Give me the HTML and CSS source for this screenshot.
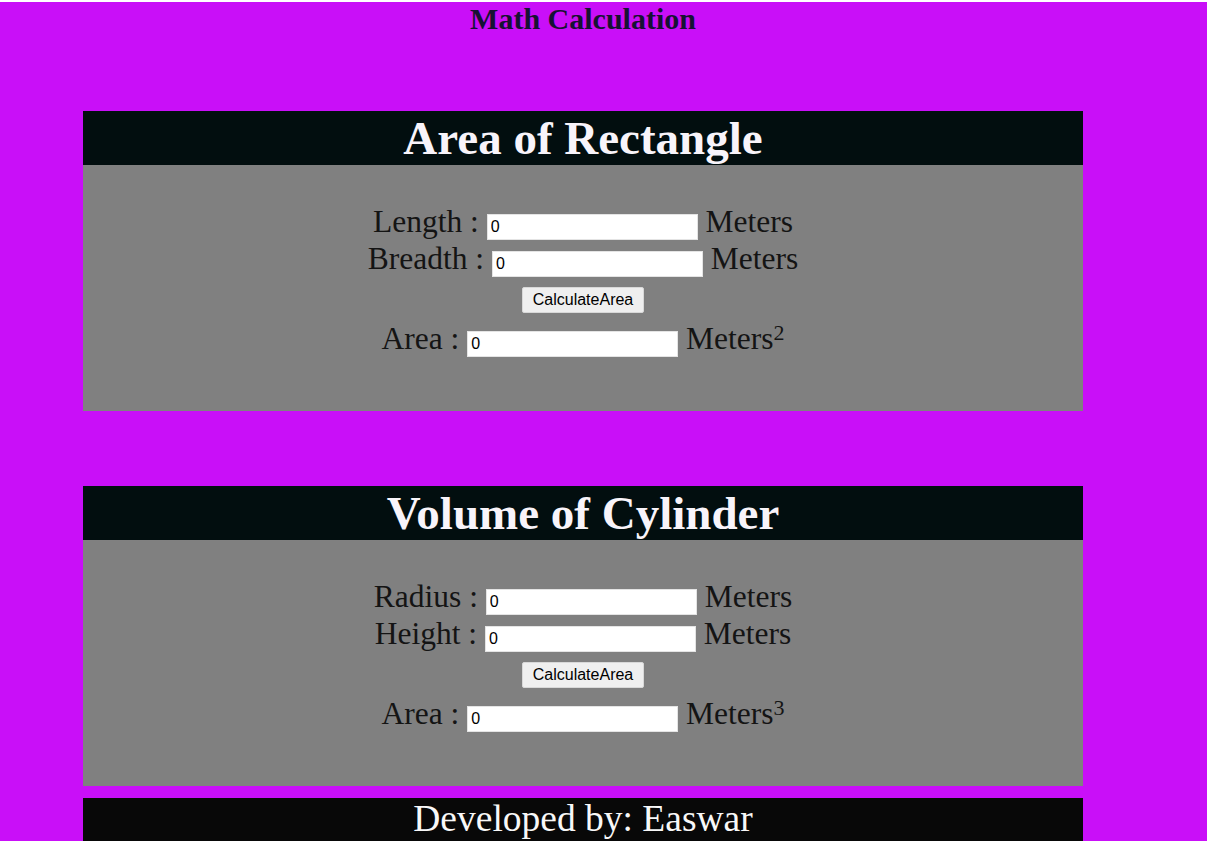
FILE: index.html
```html
<!DOCTYPE html>
<html lang="en">
<head>
<meta charset="utf-8">
<title>Math Calculation</title>
<link rel="stylesheet" href="styles.css">
</head>
<body>
<div class="page">
  <h1 class="site-title">Math Calculation</h1>

  <section class="card card-first">
    <h2 class="card-head">Area of Rectangle</h2>
    <div class="card-body">
      <div class="row">Length : <input class="field" type="text" value="0"> Meters</div>
      <div class="row">Breadth : <input class="field" type="text" value="0"> Meters</div>
      <div class="btn-row"><button class="btn" type="button">CalculateArea</button></div>
      <div class="row">Area : <input class="field" type="text" value="0"> Meters<sup class="pow">2</sup></div>
    </div>
  </section>

  <section class="card card-second">
    <h2 class="card-head">Volume of Cylinder</h2>
    <div class="card-body">
      <div class="row">Radius : <input class="field" type="text" value="0"> Meters</div>
      <div class="row">Height : <input class="field" type="text" value="0"> Meters</div>
      <div class="btn-row"><button class="btn" type="button">CalculateArea</button></div>
      <div class="row">Area : <input class="field" type="text" value="0"> Meters<sup class="pow">3</sup></div>
    </div>
  </section>

  <footer class="footer">Developed by: Easwar</footer>
</div>
</body>
</html>
```

FILE: styles.css
```css
html, body {
  margin: 0;
  padding: 0;
}

body {
  background: #c90ff8;
  border-top: 2px solid #ffffff;
  font-family: "Liberation Serif", "Times New Roman", serif;
  height: 839px;
  overflow: hidden;
}

.page {
  width: 1000px;
  margin-left: 83px;
}

.site-title {
  margin: 0;
  font-size: 30px;
  line-height: 34px;
  font-weight: bold;
  text-align: center;
  color: #161233;
}

.card {
  background: #808080;
}

.card-first {
  margin-top: 75px;
}

.card-second {
  margin-top: 75px;
}

.card-head {
  margin: 0;
  height: 54px;
  background: #020e0f;
  color: #f8f4fa;
  font-size: 47px;
  line-height: 54px;
  font-weight: bold;
  text-align: center;
}

.card-body {
  padding: 38px 0 54px;
}

.row {
  text-align: center;
  font-size: 31.5px;
  line-height: 37px;
  height: 37px;
  color: #141414;
}

.field {
  box-sizing: border-box;
  width: 211px;
  height: 26px;
  padding: 2px 3px;
  border: 1px solid #e4e4e4;
  background: #ffffff;
  font-family: "Liberation Sans", Arial, sans-serif;
  font-size: 16px;
  color: #000000;
  margin: 0;
}

.btn-row {
  display: flex;
  justify-content: center;
  padding: 10px 0 7px;
}

.btn {
  box-sizing: border-box;
  height: 26px;
  padding: 0 10px;
  margin: 0;
  background: #efefef;
  border: 1px solid #d8d8d8;
  border-radius: 2px;
  font-family: "Liberation Sans", Arial, sans-serif;
  font-size: 16px;
  color: #000000;
}

.pow {
  font-size: 22px;
  line-height: 0;
  vertical-align: 9px;
}

.footer {
  margin-top: 12px;
  height: 60px;
  background: #080808;
  color: #f8f8f8;
  font-size: 37.5px;
  line-height: 42px;
  text-align: center;
}
```
